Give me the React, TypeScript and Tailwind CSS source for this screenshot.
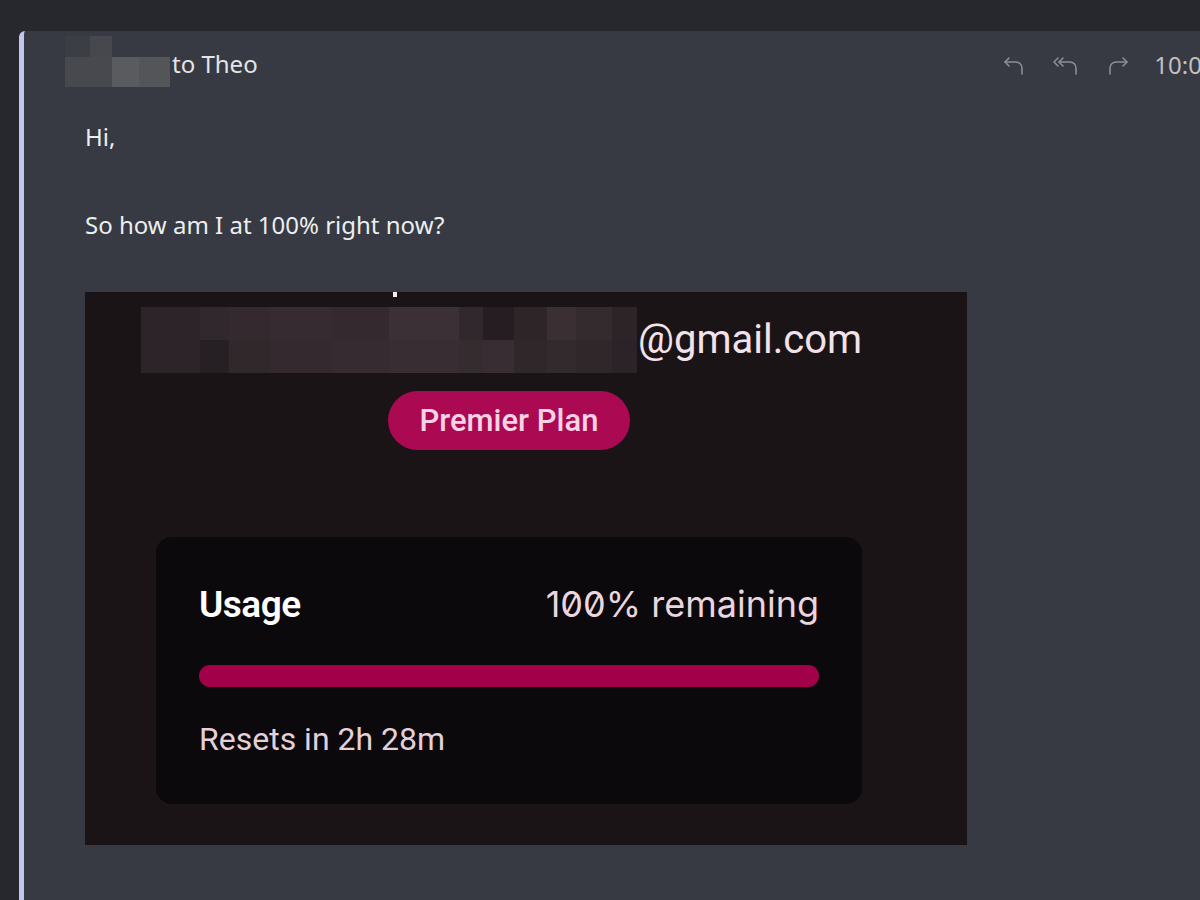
import { ReactNode } from 'react'

const topCells = [
  ['w-[59px]', 'bg-[#2c2428]'],
  ['w-[29px]', 'bg-[#30282c]'],
  ['w-[41px]', 'bg-[#33292e]'],
  ['w-[62px]', 'bg-[#352b30]'],
  ['w-[57px]', 'bg-[#33292e]'],
  ['w-[70px]', 'bg-[#3b3035]'],
  ['w-[24px]', 'bg-[#30282c]'],
  ['w-[31px]', 'bg-[#251d21]'],
  ['w-[33px]', 'bg-[#2e2529]'],
  ['w-[29px]', 'bg-[#3a3034]'],
  ['w-[36px]', 'bg-[#342b2f]'],
  ['w-[25px]', 'bg-[#2d2428]'],
]

const bottomCells = [
  ['w-[59px]', 'bg-[#2c2428]'],
  ['w-[29px]', 'bg-[#262024]'],
  ['w-[41px]', 'bg-[#31282c]'],
  ['w-[62px]', 'bg-[#33292e]'],
  ['w-[57px]', 'bg-[#352b30]'],
  ['w-[70px]', 'bg-[#372d32]'],
  ['w-[24px]', 'bg-[#352c30]'],
  ['w-[31px]', 'bg-[#372d32]'],
  ['w-[33px]', 'bg-[#30272b]'],
  ['w-[29px]', 'bg-[#332a2e]'],
  ['w-[36px]', 'bg-[#30272b]'],
  ['w-[25px]', 'bg-[#2b2327]'],
]

function ReplyIcon() {
  return (
    <svg width="24" height="20" viewBox="0 0 24 20" fill="none" stroke="#8b8e96" strokeWidth="1.6" strokeLinecap="round" strokeLinejoin="round">
      <path d="M7 2 L3 6 L7 10" />
      <path d="M3 6 H14 a6 6 0 0 1 6 6 v6" />
    </svg>
  )
}

function ReplyAllIcon() {
  return (
    <svg width="28" height="20" viewBox="0 0 28 20" fill="none" stroke="#8b8e96" strokeWidth="1.6" strokeLinecap="round" strokeLinejoin="round">
      <path d="M6 2 L2 6 L6 10" />
      <path d="M11 2 L7 6 L11 10" />
      <path d="M7 6 H18 a6 6 0 0 1 6 6 v6" />
    </svg>
  )
}

function ForwardIcon() {
  return (
    <svg width="24" height="20" viewBox="0 0 24 20" fill="none" stroke="#8b8e96" strokeWidth="1.6" strokeLinecap="round" strokeLinejoin="round">
      <path d="M17 2 L21 6 L17 10" />
      <path d="M21 6 H10 a6 6 0 0 0 -6 6 v6" />
    </svg>
  )
}

function Row({ children }: { children: ReactNode }) {
  return <div className="flex h-[33px]">{children}</div>
}

export default function App() {
  return (
    <div className="w-[1200px] h-[900px] overflow-hidden bg-[#26282d] pt-[31px] pl-[19px] font-['Noto_Sans',sans-serif]">
      <div className="w-[1260px] h-[900px] bg-[#373a42] border-l-[5px] border-[#c3c6ec] rounded-tl-[6px]">
        {/* header */}
        <div className="flex items-start justify-between h-[68px] pt-[5px] pl-[41px] pr-[20px]">
          <div className="flex items-start">
            <div className="flex flex-col w-[105px] h-[51px]">
              <div className="flex h-[21px]">
                <div className="w-[25px] bg-[#3c3e45]" />
                <div className="w-[22px] bg-[#46484e]" />
              </div>
              <div className="flex h-[30px]">
                <div className="w-[47px] bg-[#47494f]" />
                <div className="w-[27px] bg-[#5a5b5f]" />
                <div className="w-[31px] bg-[#535559]" />
              </div>
            </div>
            <span className="text-[24px] text-[#e4e5e8] leading-none mt-[16px] ml-[2px]">to Theo</span>
          </div>
          <div className="flex items-center mt-[17px]">
            <div className="flex items-center gap-[26px] mr-[24px] mt-[2px]">
              <ReplyIcon />
              <ReplyAllIcon />
              <ForwardIcon />
            </div>
            <span className="text-[24px] text-[#bfc1c6] leading-none whitespace-nowrap">10:00 AM</span>
          </div>
        </div>

        {/* body */}
        <div className="pl-[61px] pt-[26px] text-[24px] text-[#eceef0] leading-none">
          <p className="mb-[64px]">Hi,</p>
          <p>So how am I at 100% right now?</p>

          <div className="mt-[55px] w-[882px] h-[553px] bg-[#1b1417] flex flex-col items-start relative font-['Roboto',sans-serif]">
            <div className="absolute left-[308px] top-0 w-[4px] h-[5px] bg-[#f4eef0]" />
            <div className="flex items-center ml-[56px] mt-[15px]">
              <div className="flex flex-col">
                <Row>
                  {topCells.map(([w, c], i) => (
                    <div key={i} className={`${w} ${c}`} />
                  ))}
                </Row>
                <Row>
                  {bottomCells.map(([w, c], i) => (
                    <div key={i} className={`${w} ${c}`} />
                  ))}
                </Row>
              </div>
              <span className="text-[40px] text-[#f2e2ea] leading-none ml-[1px]">@gmail.com</span>
            </div>

            <div className="mt-[18px] ml-[303px] w-[242px] h-[59px] rounded-full bg-[#ab0a52] flex items-center justify-center">
              <span className="text-[31px] font-medium text-[#f8d3e4] leading-none">Premier Plan</span>
            </div>

            <div className="mt-[87px] ml-[71px] w-[706px] h-[267px] rounded-[16px] bg-[#0b090b] px-[43px] pt-[49px]">
              <div className="flex items-center justify-between h-[36px]">
                <span className="text-[37px] font-semibold text-white leading-none tracking-[-0.5px]">Usage</span>
                <span className="text-[36px] text-[#ead6df] leading-none font-['Inter',sans-serif] slashed-zero">100% remaining</span>
              </div>
              <div className="mt-[43px] h-[22px] w-full rounded-full bg-[#a3004a]" />
              <div className="mt-[36px] text-[32px] text-[#e4d0d9] leading-none">Resets in 2h 28m</div>
            </div>
          </div>
        </div>
      </div>
    </div>
  )
}
